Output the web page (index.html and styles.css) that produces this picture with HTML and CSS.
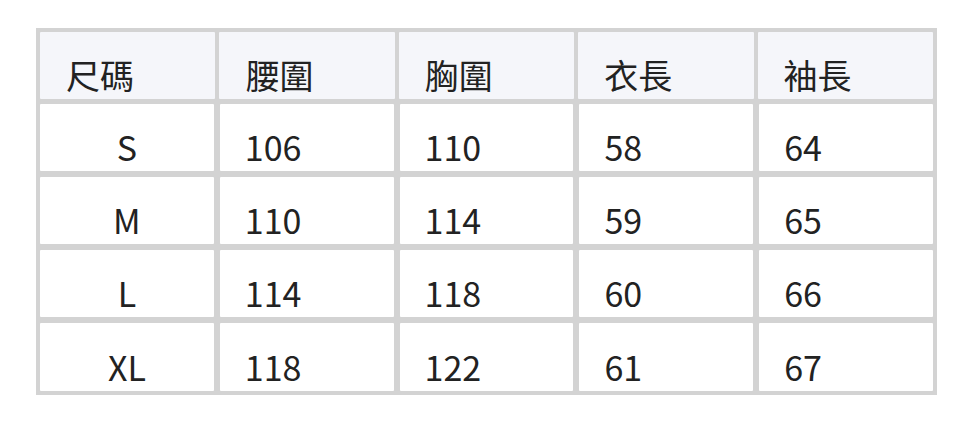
FILE: index.html
```html
<!DOCTYPE html>
<html lang="zh-Hant">
<head>
<meta charset="utf-8">
<link rel="stylesheet" href="styles.css">
</head>
<body>
<div class="size-table">
  <div class="row head">
    <div class="cell">尺碼</div>
    <div class="cell">腰圍</div>
    <div class="cell">胸圍</div>
    <div class="cell">衣長</div>
    <div class="cell">袖長</div>
  </div>
  <div class="row body">
    <div class="cell size">S</div>
    <div class="cell">106</div>
    <div class="cell">110</div>
    <div class="cell">58</div>
    <div class="cell">64</div>
  </div>
  <div class="row body">
    <div class="cell size">M</div>
    <div class="cell">110</div>
    <div class="cell">114</div>
    <div class="cell">59</div>
    <div class="cell">65</div>
  </div>
  <div class="row body">
    <div class="cell size">L</div>
    <div class="cell">114</div>
    <div class="cell">118</div>
    <div class="cell">60</div>
    <div class="cell">66</div>
  </div>
  <div class="row body last">
    <div class="cell size">XL</div>
    <div class="cell">118</div>
    <div class="cell">122</div>
    <div class="cell">61</div>
    <div class="cell">67</div>
  </div>
</div>
</body>
</html>
```

FILE: styles.css
```css
html, body {
  margin: 0;
  padding: 0;
  background: #ffffff;
}

body {
  padding: 28px 35px 0 36px;
  font-family: "Noto Sans CJK TC", "Noto Sans", sans-serif;
  color: #222222;
}

.size-table {
  width: 901px;
  box-sizing: border-box;
  background: #d3d3d3;
  padding: 4px;
  display: flex;
  flex-direction: column;
  gap: 6px;
}

.row {
  display: grid;
  grid-template-columns: repeat(5, 1fr);
  height: 67px;
}

.row.head {
  column-gap: 4px;
  margin-bottom: -1px;
}

.row.body {
  column-gap: 6px;
}

.row.last {
  height: 68px;
}

.cell {
  display: flex;
  align-items: flex-end;
  padding: 0 0 3px 25px;
  font-size: 34px;
  line-height: 1.2;
  background: #ffffff;
  border-radius: 1px;
}

.head .cell {
  background: #f5f6fa;
  padding-left: 26px;
}

.cell.size {
  justify-content: center;
  padding-left: 0;
}
```
